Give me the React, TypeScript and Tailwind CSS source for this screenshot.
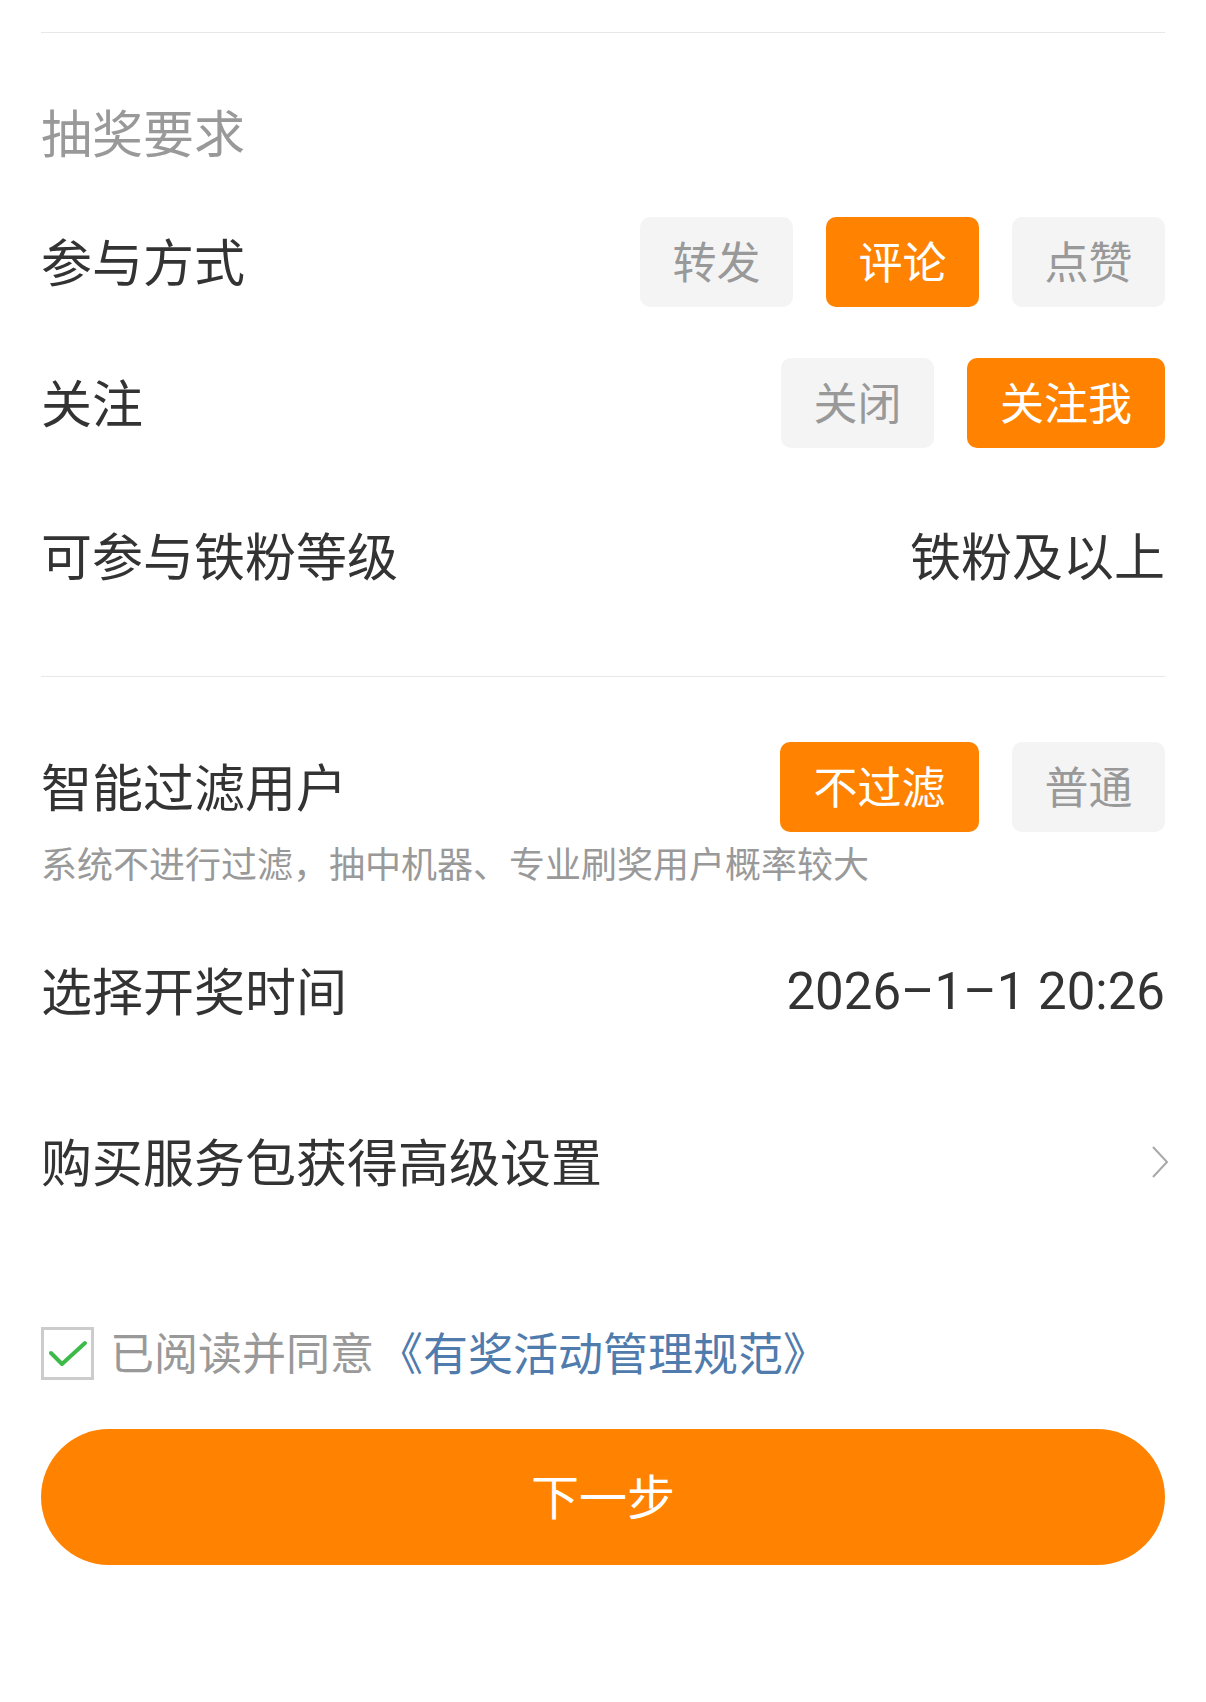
import React from 'react';

const font = { fontFamily: '"Noto Sans", "Noto Sans CJK SC", sans-serif' };

interface OptionProps {
    label: string;
    active?: boolean;
    width: string;
}

const Option: React.FC<OptionProps> = ({ label, active, width }) => (
    <div
        className={`${width} h-[90px] rounded-[10px] flex items-center justify-center text-[44px] leading-none ${
            active ? 'bg-[#ff8200] text-white' : 'bg-[#f4f4f4] text-[#999999]'
        }`}
    >
        {label}
    </div>
);

const Row: React.FC<{ className: string; children: React.ReactNode }> = ({ className, children }) => (
    <div className={`flex items-center justify-between ${className}`}>{children}</div>
);

export default function App() {
    return (
        <div className="bg-white w-[1206px] min-h-[1702px] px-[41px]" style={font}>
            <div className="h-[32px]" />
            <div className="h-px bg-[#e8e8e8]" />

            <Row className="mt-[50px] h-[100px]">
                <span className="text-[51px] text-[#999999] leading-none">抽奖要求</span>
            </Row>

            <Row className="mt-[34px] h-[90px]">
                <span className="text-[51px] text-[#333333] leading-none">参与方式</span>
                <div className="flex gap-[33px]">
                    <Option label="转发" width="w-[153px]" />
                    <Option label="评论" width="w-[153px]" active />
                    <Option label="点赞" width="w-[153px]" />
                </div>
            </Row>

            <Row className="mt-[51px] h-[90px]">
                <span className="text-[51px] text-[#333333] leading-none">关注</span>
                <div className="flex gap-[33px]">
                    <Option label="关闭" width="w-[153px]" />
                    <Option label="关注我" width="w-[198px]" active />
                </div>
            </Row>

            <Row className="mt-[58px] h-[100px]">
                <span className="text-[51px] text-[#333333] leading-none">可参与铁粉等级</span>
                <span className="text-[51px] text-[#333333] leading-none">铁粉及以上</span>
            </Row>

            <div className="mt-[70px] h-px bg-[#e8e8e8]" />

            <Row className="mt-[65px] h-[90px]">
                <span className="text-[51px] text-[#333333] leading-none">智能过滤用户</span>
                <div className="flex gap-[33px]">
                    <Option label="不过滤" width="w-[199px]" active />
                    <Option label="普通" width="w-[153px]" />
                </div>
            </Row>
            <div className="mt-[13px] h-[40px] flex items-center text-[36px] text-[#999999] leading-none">
                系统不进行过滤，抽中机器、专业刷奖用户概率较大
            </div>

            <Row className="mt-[56px] h-[100px]">
                <span className="text-[51px] text-[#333333] leading-none">选择开奖时间</span>
                <span className="text-[51px] text-[#333333] leading-none" style={{ fontFamily: 'Roboto, "Noto Sans", sans-serif' }}>
                    2026–1–1 20:26
                </span>
            </Row>

            <Row className="mt-[71px] h-[100px]">
                <span className="text-[51px] text-[#333333] leading-none">购买服务包获得高级设置</span>
                <svg width="20" height="34" viewBox="0 0 20 34" className="mr-[-5px]">
                    <path d="M3 2 L17 17 L3 32" fill="none" stroke="#a8a8a8" strokeWidth="2" />
                </svg>
            </Row>

            <div className="mt-[111px] h-[60px] flex items-center">
                <div className="w-[53px] h-[53px] border-[3px] border-[#cccccc] flex items-center justify-center">
                    <svg width="40" height="30" viewBox="0 0 40 30">
                        <path d="M3 15 L14 26 L37 5" fill="none" stroke="#3dbb4a" strokeWidth="4" strokeLinecap="round" strokeLinejoin="round" />
                    </svg>
                </div>
                <span className="ml-[16px] text-[44px] text-[#999999] leading-none">已阅读并同意</span>
                <span className="ml-[4px] text-[45px] text-[#4f7bad] leading-none">《有奖活动管理规范》</span>
            </div>

            <button className="mt-[46px] w-full h-[136px] rounded-full bg-[#ff8200] text-white text-[48px] leading-none flex items-center justify-center">
                下一步
            </button>
        </div>
    );
}
